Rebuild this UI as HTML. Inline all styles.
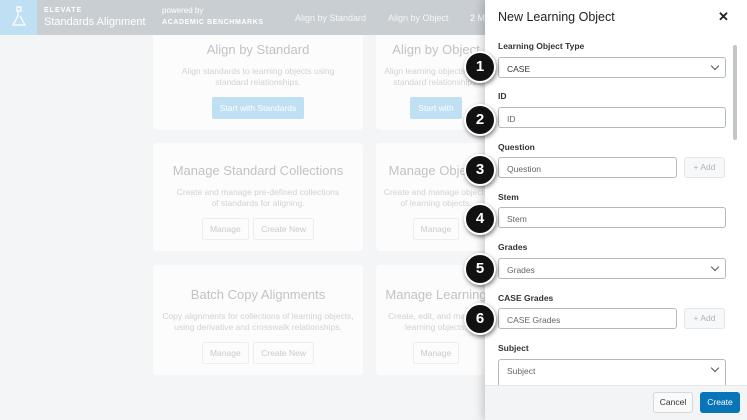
<!DOCTYPE html><html><head><style>
*{box-sizing:border-box;margin:0;padding:0}
body{width:747px;height:420px;overflow:hidden;position:relative;font-family:"Liberation Sans",sans-serif;background:#f4f5f6}
.hdr{position:absolute;left:0;top:0;width:747px;height:35px;background:#c9ced2;color:#fff}
.logo{position:absolute;left:0;top:0;width:37px;height:35px;background:#bfe0f3}
.card{position:absolute;background:#fcfcfd;border-radius:4px;text-align:center;color:#c5c8cb}
.card h3{font-weight:normal;font-size:13px;color:#c0c3c6;margin-top:12px}
.card p{font-size:8.5px;line-height:11px;margin-top:9px;color:#cfd2d4}
.btn{display:inline-block;font-size:8.5px;padding:5px 7px;margin-top:9px;border:1px solid #eceef0;color:#c7cacd;border-radius:2px}
.blue{background:#bfe0f3;color:#fff;border-color:#bfe0f3}
.panel{position:absolute;left:485px;top:0;width:262px;height:420px;background:#fff;box-shadow:-3px 0 8px rgba(0,0,0,.18);overflow:hidden}
.lbl{position:absolute;left:13px;font-size:8.5px;font-weight:bold;color:#333}
.in{position:absolute;left:13px;height:21px;border:1px solid #b5babe;border-radius:3px;font-size:8.5px;color:#666;padding:6px 8px;background:#fff}
.add{position:absolute;left:199px;width:41px;height:21px;border:1px solid #e3e5e7;border-radius:3px;background:#f7f8f9;color:#b0b4b8;font-size:8.5px;text-align:center;line-height:19px}
.chev{position:absolute;right:7px;top:5px;width:6px;height:6px;border-right:1px solid #555;border-bottom:1px solid #555;transform:rotate(45deg)}
.badge{position:absolute;width:32px;height:32px;border-radius:50%;background:#111;border:2px solid #fff;color:#fff;font-weight:bold;font-size:15px;text-align:center;line-height:28px;box-shadow:1px 2px 4px rgba(0,0,0,.5)}
</style></head><body>
<div class="card" style="left:153px;top:30px;width:210px;height:100px"><h3>Align by Standard</h3><p>Align standards to learning objects using<br>standard relationships.</p><span class="btn blue">Start with Standards</span></div>
<div class="card" style="left:376px;top:30px;width:120px;height:100px"><h3>Align by Object</h3><p>Align learning objects using<br>standard relationships.</p><span class="btn blue">Start with</span></div>
<div class="card" style="left:153px;top:143px;width:210px;height:108px"><h3 style="margin-top:20px">Manage Standard Collections</h3><p>Create and manage pre-defined collections<br>of standards for aligning.</p><span class="btn">Manage</span> <span class="btn">Create New</span></div>
<div class="card" style="left:376px;top:143px;width:120px;height:108px"><h3 style="margin-top:20px">Manage Objects</h3><p>Create and manage objects<br>of learning objects.</p><span class="btn">Manage</span></div>
<div class="card" style="left:153px;top:265px;width:210px;height:110px"><h3 style="margin-top:22px">Batch Copy Alignments</h3><p>Copy alignments for collections of learning objects,<br>using derivative and crosswalk relationships.</p><span class="btn">Manage</span> <span class="btn">Create New</span></div>
<div class="card" style="left:376px;top:265px;width:120px;height:110px"><h3 style="margin-top:22px">Manage Learning</h3><p>Create, edit, and manage<br>learning objects.</p><span class="btn">Manage</span></div>
<div class="hdr"><div class="logo"><svg width="37" height="35"><path d="M17 7h4v4h-4zM18 11v5l-5 9h12l-5-9" fill="none" stroke="#fff" stroke-width="1.2"/></svg></div>
<div style="position:absolute;left:44px;top:7px;font-size:7px;font-weight:bold;letter-spacing:1px">ELEVATE</div>
<div style="position:absolute;left:44px;top:16px;font-size:11px">Standards Alignment</div>
<div style="position:absolute;left:162px;top:6px;font-size:8px">powered by</div>
<div style="position:absolute;left:162px;top:19px;font-size:7px;font-weight:bold;letter-spacing:.6px">ACADEMIC BENCHMARKS</div>
<div style="position:absolute;left:295px;top:13px;font-size:9px;color:#f4f6f7">Align by Standard</div>
<div style="position:absolute;left:388px;top:13px;font-size:9px;color:#f4f6f7">Align by Object</div>
<div style="position:absolute;left:470px;top:13px;font-size:9px">2 M</div></div>
<div class="panel">
<div style="position:absolute;left:13px;top:10px;font-size:12.5px;color:#222">New Learning Object</div>
<div style="position:absolute;left:233px;top:9px;font-size:13px;font-weight:bold;color:#222">✕</div>
<div class="lbl" style="top:41px">Learning Object Type</div><div class="in" style="top:57px;width:228px;color:#333">CASE<span class="chev"></span></div>
<div class="lbl" style="top:91px">ID</div><div class="in" style="top:107px;width:228px">ID</div>
<div class="lbl" style="top:142px">Question</div><div class="in" style="top:157px;width:179px">Question</div><div class="add" style="top:157px">+ Add</div>
<div class="lbl" style="top:192px">Stem</div><div class="in" style="top:207px;width:228px">Stem</div>
<div class="lbl" style="top:242px">Grades</div><div class="in" style="top:258px;width:228px">Grades<span class="chev"></span></div>
<div class="lbl" style="top:293px">CASE Grades</div><div class="in" style="top:308px;width:179px">CASE Grades</div><div class="add" style="top:308px">+ Add</div>
<div class="lbl" style="top:343px">Subject</div><div class="in" style="top:359px;width:228px;height:30px">Subject<span class="chev"></span></div>
<div style="position:absolute;left:248px;top:45px;width:4px;height:95px;background:#c3c6c9;border-radius:2px"></div>
<div style="position:absolute;left:0;top:385px;width:262px;height:35px;background:#f2f4f5;border-top:1px solid #e6e8ea"></div>
<div style="position:absolute;left:168px;top:392px;width:40px;height:21px;border:1px solid #d5d8db;border-radius:3px;background:#fafafa;font-size:8.5px;color:#333;text-align:center;line-height:19px">Cancel</div>
<div style="position:absolute;left:215px;top:392px;width:40px;height:21px;border-radius:3px;background:#0a74b8;font-size:8.5px;color:#fff;text-align:center;line-height:21px">Create</div>
</div>
<div class="badge" style="left:464px;top:51px">1</div>
<div class="badge" style="left:464px;top:104px">2</div>
<div class="badge" style="left:464px;top:154px">3</div>
<div class="badge" style="left:464px;top:203px">4</div>
<div class="badge" style="left:464px;top:253px">5</div>
<div class="badge" style="left:464px;top:303px">6</div>
</body></html>
